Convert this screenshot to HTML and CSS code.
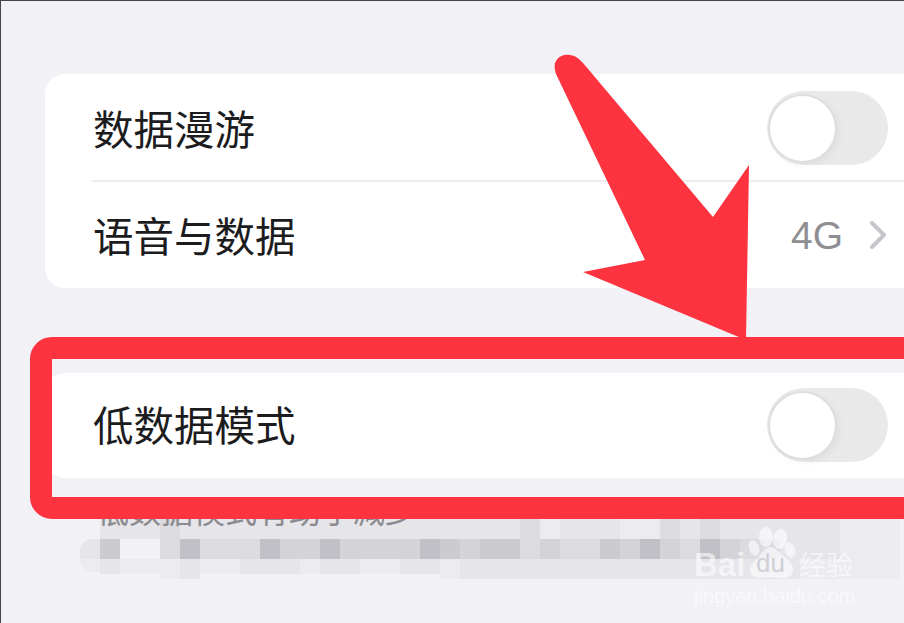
FILE: index.html
```html
<!DOCTYPE html>
<html lang="zh-CN">
<head>
<meta charset="utf-8">
<title>低数据模式</title>
<link rel="stylesheet" href="styles.css">
</head>
<body>
<div class="screen">
  <section class="card card-top">
    <div class="row row-first">
      <span class="label">数据漫游</span>
      <span class="toggle"><span class="knob"></span></span>
    </div>
    <div class="divider"></div>
    <div class="row row-second">
      <span class="label">语音与数据</span>
      <span class="value">
        <span class="value-text">4G</span>
        <svg class="chevron" viewBox="0 0 16 28" width="16" height="28"><path d="M2 2 L14 14 L2 26" fill="none" stroke="#c6c6ca" stroke-width="4" stroke-linecap="round" stroke-linejoin="round"/></svg>
      </span>
    </div>
  </section>

  <section class="card card-low">
    <div class="row">
      <span class="label">低数据模式</span>
      <span class="toggle"><span class="knob"></span></span>
    </div>
  </section>

  <p class="note">低数据模式有助于减少</p>

  <div class="mosaic">
    <div class="mrow mrow-1"><i class="a"></i><i class="c"></i><i class="c"></i><i class="c"></i><i class="d"></i><i class="c"></i><i class="c"></i><i class="c"></i><i class="c"></i><i class="c"></i><i class="c"></i><i class="c"></i><i class="c"></i><i class="c"></i><i class="c"></i><i class="c"></i><i class="c"></i><i class="c"></i><i class="c"></i><i class="c"></i><i class="c"></i><i class="c"></i><i class="d"></i><i class="b"></i><i class="c"></i><i class="c"></i><i class="c"></i><i class="b"></i><i class="b"></i><i class="d"></i><i class="c"></i><i class="d"></i><i class="c"></i><i class="c"></i><i class="c"></i><i class="c"></i><i class="c"></i><i class="c"></i><i class="b"></i><i class="b"></i><i class="b"></i></div>
    <div class="mrow mrow-2"><i class="c lead"></i><i class="f"></i><i class="a"></i><i class="a"></i><i class="d"></i><i class="g"></i><i class="d"></i><i class="d"></i><i class="d"></i><i class="g"></i><i class="e"></i><i class="e"></i><i class="g"></i><i class="e"></i><i class="e"></i><i class="e"></i><i class="e"></i><i class="g"></i><i class="f"></i><i class="e"></i><i class="f"></i><i class="f"></i><i class="d"></i><i class="e"></i><i class="d"></i><i class="d"></i><i class="f"></i><i class="e"></i><i class="g"></i><i class="e"></i><i class="d"></i><i class="g"></i><i class="e"></i><i class="d"></i><i class="d"></i><i class="c"></i><i class="c"></i><i class="c"></i><i class="b"></i><i class="b"></i><i class="b"></i></div>
    <div class="mrow mrow-3"><i class="b lead-low"></i><i class="c short"></i><i class="b short"></i><i class="b short"></i><i class="b"></i><i class="c"></i><i class="b short"></i><i class="b short"></i><i class="c short"></i><i class="c short"></i><i class="c short"></i><i class="b short"></i><i class="c short"></i><i class="c short"></i><i class="b short"></i><i class="b short"></i><i class="c short"></i><i class="c short"></i><i class="b"></i><i class="c"></i><i class="c"></i><i class="c"></i><i class="c"></i><i class="c"></i><i class="c"></i><i class="c"></i><i class="c"></i><i class="c"></i><i class="c"></i><i class="c"></i><i class="c"></i><i class="c"></i><i class="c"></i><i class="c"></i><i class="c"></i><i class="c"></i><i class="b"></i><i class="b"></i><i class="b"></i><i class="b"></i><i class="b"></i></div>
  </div>

  <div class="frame"></div>

  <svg class="arrow" viewBox="0 0 904 623" width="904" height="623"><path d="M556 74 Q551 59 564 55 Q575 53 583 63 L713 217 L749 165 L746 340 L583 272 L645 260 Z" fill="#fe3340"/></svg>

  <div class="watermark">
    <div class="brand">
      <span class="brand-bai">Bai</span>
      <span class="paw">
        <svg viewBox="0 0 48 52" width="48" height="52">
          <ellipse cx="6" cy="21" rx="5" ry="8" transform="rotate(-20 6 21)"/>
          <ellipse cx="18" cy="10" rx="7" ry="10"/>
          <ellipse cx="32" cy="12" rx="7" ry="10" transform="rotate(8 32 12)"/>
          <ellipse cx="42" cy="23" rx="5" ry="8" transform="rotate(-20 42 23)"/>
          <path d="M22 20 C27 20 30 24 34 28 C40 32 46 37 45 44 C44 50 38 52 32 51 C26 50 18 50 13 51 C6 52 2 47 2 42 C3 36 9 33 12 28 C15 24 18 20 22 20Z"/>
        </svg>
        <span class="paw-du">du</span>
      </span>
      <span class="brand-cn">经验</span>
    </div>
    <div class="site">jingyan.baidu.com</div>
  </div>
</div>
</body>
</html>
```

FILE: styles.css
```css
* { box-sizing: border-box; }
html, body { margin: 0; padding: 0; }
body { width: 904px; height: 623px; overflow: hidden; }

.screen {
  position: relative;
  width: 904px;
  height: 623px;
  overflow: hidden;
  padding-top: 73px;
  background: #f1f1f6;
  border-top: 1px solid #45454a;
  border-left: 1px solid #45454a;
  font-family: "Noto Sans CJK SC", "Liberation Sans", sans-serif;
}

.card {
  margin-left: 44px;
  margin-right: -20px;
  background: #fff;
  border-radius: 20px;
}
.card-low { margin-top: 85px; height: 105px; }

.row {
  display: flex;
  align-items: center;
  justify-content: space-between;
  height: 106px;
  padding: 0 36px 0 48px;
}
.row-first { padding-top: 2px; }
.card-low .row { height: 105px; padding-bottom: 1px; }

.label {
  font-size: 40.5px;
  line-height: 48px;
  color: #1c1c1e;
}
.card-low .label { position: relative; top: -1px; }

.divider {
  height: 2px;
  margin-left: 47px;
  background: #eeeef0;
}

.toggle {
  display: flex;
  align-items: center;
  width: 121px;
  height: 74px;
  padding: 0 3px;
  border-radius: 37px;
  background: #e9e9ea;
}
.knob {
  width: 65px;
  height: 65px;
  border-radius: 50%;
  background: #fff;
  box-shadow: 0 0 0 2px #dedee0, 3px 3px 8px rgba(0, 0, 0, .06);
}

.value { display: flex; align-items: center; gap: 27px; margin-right: 2px; }
.value-text {
  font-family: "Liberation Sans", sans-serif;
  font-size: 39px;
  line-height: 48px;
  color: #8e8e93;
  position: relative;
  top: 1px;
}
.chevron { display: block; }

.note {
  position: relative;
  z-index: 1;
  margin: 19px 0 -8px;
  height: 30px;
  overflow: hidden;
  padding-left: 96px;
  font-size: 32px;
  line-height: 24px;
  white-space: nowrap;
  color: #8a8a8e;
}

.mosaic { margin-left: 79px; }
.mrow { display: flex; }
.mrow i { display: block; flex: none; width: 20px; height: 20px; }
.mrow-3 i.short { height: 15px; }
.mrow-3 i.lead-low { height: 13px; border-bottom-left-radius: 14px; }
.mrow-2 i.lead { border-top-left-radius: 12px; }
.a { background: #f1f1f6; }
.b { background: #ebebf0; }
.c { background: #e5e5ea; }
.d { background: #dbdbe0; }
.e { background: #d3d3d8; }
.f { background: #cbcbd0; }
.g { background: #c0c0c6; }

.frame {
  position: absolute;
  z-index: 2;
  left: 29px;
  top: 336px;
  width: 920px;
  height: 182px;
  border: 22px solid #fe3340;
  border-radius: 22px;
}

.arrow { position: absolute; z-index: 3; left: -1px; top: -1px; display: block; }

.watermark {
  position: absolute;
  z-index: 3;
  left: 693px;
  top: 526px;
  width: 162px;
  color: rgba(255, 255, 255, .6);
}
.brand { display: flex; align-items: flex-end; height: 52px; }
.brand-bai {
  font-family: "Liberation Sans", sans-serif;
  font-weight: 700;
  font-size: 33px;
  line-height: 33px;
  width: 54px;
  position: relative;
  top: 2px;
}
.paw { position: relative; display: block; width: 48px; height: 52px; flex: none; }
.paw svg { display: block; fill: rgba(255, 255, 255, .6); }
.paw-du {
  position: absolute;
  left: 8px;
  top: 23px;
  font-family: "Liberation Sans", sans-serif;
  font-size: 26px;
  line-height: 26px;
  color: #cfcfd5;
}
.brand-cn {
  font-size: 27px;
  line-height: 30px;
  width: 58px;
  padding-left: 3px;
  white-space: nowrap;
}
.site {
  margin-top: 7px;
  font-family: "Liberation Sans", sans-serif;
  font-size: 20px;
  line-height: 20px;
  white-space: nowrap;
}
```
